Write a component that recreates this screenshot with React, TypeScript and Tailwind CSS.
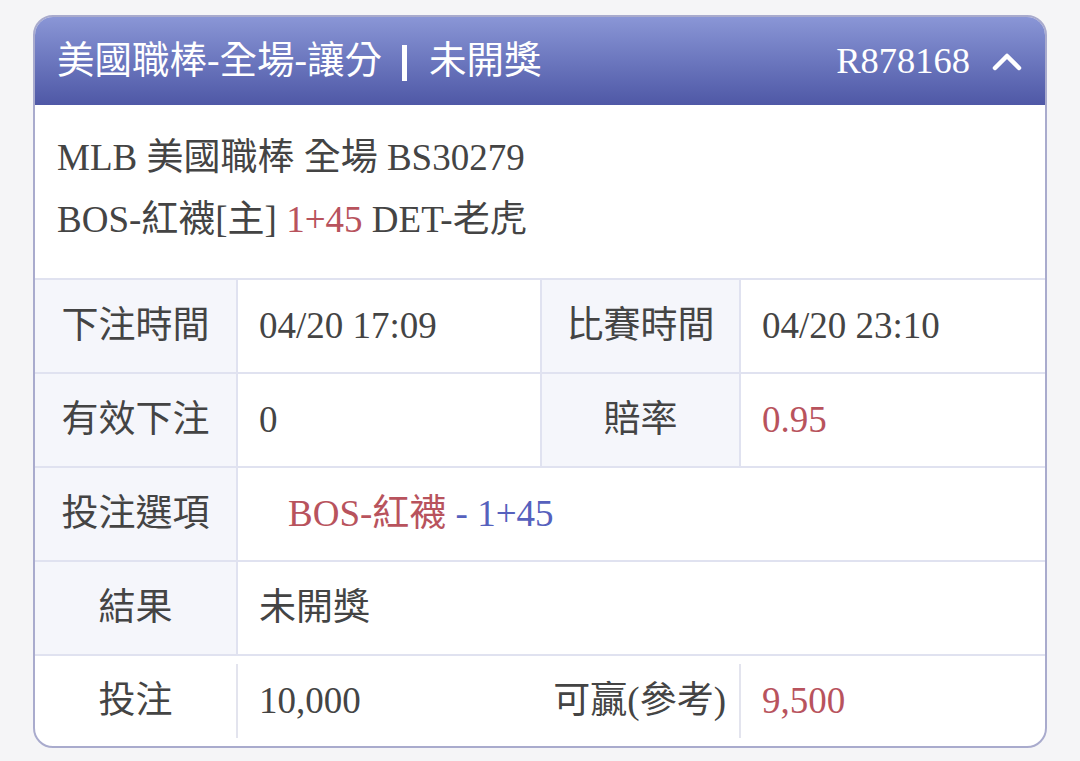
const font = 'font-["Liberation_Serif","Noto_Sans_CJK_TC",serif]';

const Label = ({
  children,
  bg = true,
  w = 'w-[201px]',
}: {
  children: React.ReactNode;
  bg?: boolean;
  w?: string;
}) => (
  <div className={`${w} shrink-0 flex items-center justify-center ${bg ? 'bg-[#f5f6fb]' : ''}`}>
    {children}
  </div>
);

const Divider = () => <div className="w-[2px] shrink-0 bg-[#e0e2f0]" />;

export default function App() {
  return (
    <div className={`min-h-screen bg-[#f5f5f7] pt-[15px] px-[33px] ${font}`}>
      <div className="rounded-[20px] border-2 border-[#a9abcd] overflow-hidden bg-white text-[37px] text-[#444]">
        {/* header */}
        <div className="h-[88px] flex items-center justify-between pl-[22px] pr-[23px] bg-gradient-to-b from-[#8a96d6] to-[#4f58a6] text-white">
          <div className="flex items-center text-[37.5px]">
            <span>美國職棒-全場-讓分</span>
            <span className="inline-block w-[5px] h-[36px] bg-white ml-[20px] mr-[22px] mt-[3px]" />
            <span>未開獎</span>
          </div>
          <div className="flex items-center gap-[22px] text-[36.5px]">
            <span>R878168</span>
            <svg width="30" height="20" viewBox="0 0 30 20" fill="none">
              <path d="M3 17 L15 5 L27 17" stroke="white" strokeWidth="4.5" strokeLinecap="round" strokeLinejoin="round" />
            </svg>
          </div>
        </div>

        {/* info */}
        <div className="pt-[22px] pb-[27px] px-[22px] leading-[62px]">
          <div>MLB 美國職棒 全場 BS30279</div>
          <div>
            BOS-紅襪[主] <span className="text-[#b8535d]">1+45</span> DET-老虎
          </div>
        </div>

        {/* table */}
        <div className="flex h-[94px] border-t-2 border-[#e0e2f0]">
          <Label>下注時間</Label>
          <Divider />
          <div className="w-[302px] shrink-0 flex items-center pl-[21px]">04/20 17:09</div>
          <Divider />
          <Label w="w-[197px]">比賽時間</Label>
          <Divider />
          <div className="flex-1 flex items-center pl-[21px]">04/20 23:10</div>
        </div>

        <div className="flex h-[94px] border-t-2 border-[#e0e2f0]">
          <Label>有效下注</Label>
          <Divider />
          <div className="w-[302px] shrink-0 flex items-center pl-[21px]">0</div>
          <Divider />
          <Label w="w-[197px]">賠率</Label>
          <Divider />
          <div className="flex-1 flex items-center pl-[21px] text-[#b8535d]">0.95</div>
        </div>

        <div className="flex h-[94px] border-t-2 border-[#e0e2f0]">
          <Label>投注選項</Label>
          <Divider />
          <div className="flex-1 flex items-center pl-[50px] whitespace-pre">
            <span className="text-[#b8535d]">BOS-紅襪</span>
            <span className="text-[#5661bd]"> - 1+45</span>
          </div>
        </div>

        <div className="flex h-[94px] border-t-2 border-[#e0e2f0]">
          <Label>結果</Label>
          <Divider />
          <div className="flex-1 flex items-center pl-[21px]">未開獎</div>
        </div>

        <div className="flex h-[92px] border-t-2 border-[#e0e2f0] items-center">
          <Label bg={false}>投注</Label>
          <div className="w-[2px] h-[74px] shrink-0 bg-[#e3e4ee]" />
          <div className="w-[302px] shrink-0 flex items-center pl-[21px]">10,000</div>
          <div className="w-[199px] shrink-0 flex items-center justify-end pr-[13px]">可贏(參考)</div>
          <div className="w-[2px] h-[74px] shrink-0 bg-[#e3e4ee]" />
          <div className="flex-1 flex items-center pl-[21px] text-[#b8535d]">9,500</div>
        </div>
      </div>
    </div>
  );
}
